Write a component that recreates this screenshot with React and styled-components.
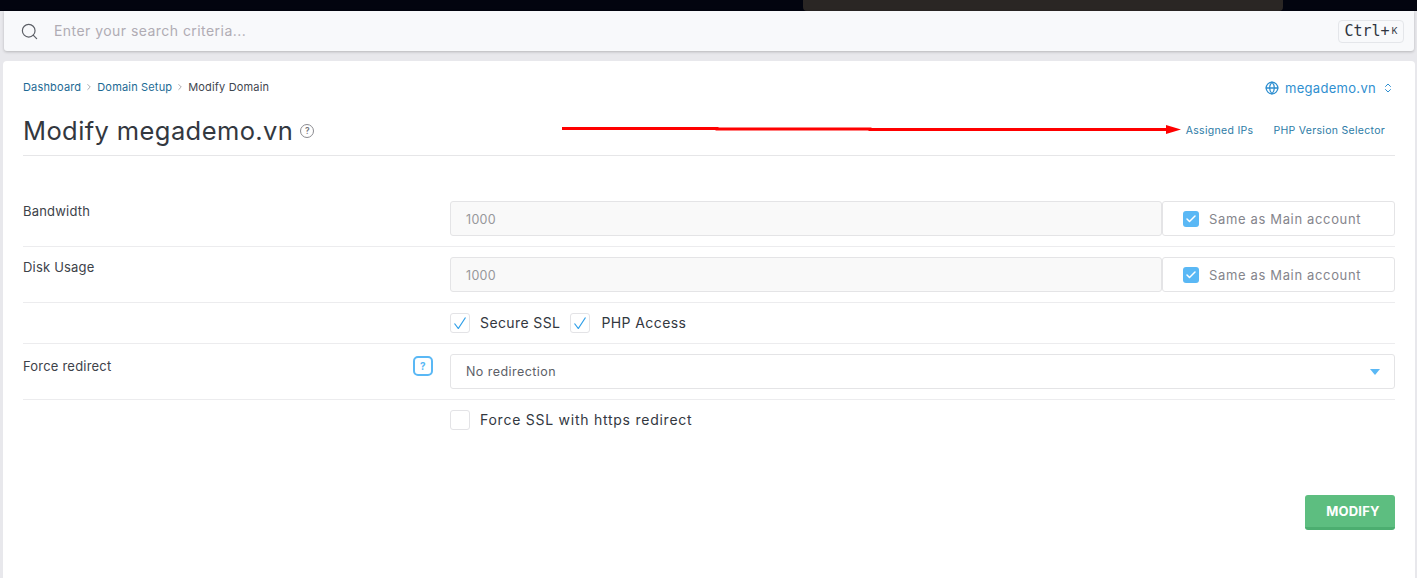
import React from "react";
import styled, { createGlobalStyle } from "styled-components";
import { Search, Globe, ChevronsUpDown, ChevronRight, Check } from "lucide-react";

const GlobalStyle = createGlobalStyle`
  html, body {
    margin: 0;
    height: 100%;
    overflow: hidden;
    background: #e8e8ec;
    font-family: Inter, "Liberation Sans", sans-serif;
  }
  * { box-sizing: border-box; }
`;

const Page = styled.div`
  height: 578px;
  display: flex;
  flex-direction: column;
`;

const TopBand = styled.div`
  height: 11px;
  flex: none;
  background: #02040f;
  padding-left: 803px;
`;

const TabEdge = styled.div`
  width: 480px;
  height: 11px;
  background: #2a2624;
  border-bottom-left-radius: 4px;
  border-bottom-right-radius: 4px;
`;

const SearchBar = styled.div`
  flex: none;
  height: 40px;
  margin: 0 3px 0 4px;
  padding: 0 10px 0 16px;
  display: flex;
  align-items: center;
  background: #f8f9fb;
  border-radius: 0 0 3px 3px;
  box-shadow: 0 1px 3px rgba(0, 0, 0, 0.22);
`;

const SearchText = styled.span`
  margin-left: 15px;
  padding-bottom: 2px;
  flex: 1;
  font-size: 14px;
  letter-spacing: 0.45px;
  color: #b0acb4;
`;

const Kbd = styled.kbd`
  height: 23px;
  width: 66px;
  padding-bottom: 1px;
  display: flex;
  align-items: center;
  justify-content: center;
  border: 1px solid #e4e6ea;
  border-radius: 4px;
  font-family: "DejaVu Sans Mono", monospace;
  font-size: 15px;
  color: #2e3440;

  small {
    font-family: Inter, sans-serif;
    font-size: 9px;
    margin-left: 2px;
  }
`;

const Card = styled.main`
  flex: 1;
  margin: 10px 2px 0 3px;
  padding: 0 20px;
  background: #fff;
  border-radius: 4px 4px 0 0;
  display: flex;
  flex-direction: column;
`;

const CrumbRow = styled.div`
  height: 52px;
  display: flex;
  align-items: center;
  justify-content: space-between;
`;

const Crumbs = styled.nav`
  display: flex;
  align-items: center;
  gap: 3px;
  font-size: 11px;
  letter-spacing: 0.17px;
  color: #3f4650;
  svg { color: #9a9aa0; }
`;

const CrumbLink = styled.a`
  color: #1c6a94;
`;

const DomainPicker = styled.div`
  display: flex;
  align-items: center;
  gap: 6px;
  margin: 2px 1px 0 0;
  font-size: 13px;
  letter-spacing: 0.3px;
  color: #2f8fd0;
`;

const PickerArrows = styled(ChevronsUpDown)`
  margin-left: 0;
`;

const TitleRow = styled.header`
  height: 43px;
  padding-top: 1px;
  display: flex;
  align-items: flex-start;
  border-bottom: 1px solid #e6e6e8;
`;

const Title = styled.h1`
  margin: 0;
  font-size: 25.5px;
  line-height: 34px;
  font-weight: 400;
  letter-spacing: 0.4px;
  color: #33383f;
`;

const HelpDot = styled.span`
  width: 14px;
  height: 14px;
  margin: 10px 0 0 7px;
  border: 1.5px solid #8b8b90;
  border-radius: 50%;
  display: flex;
  align-items: center;
  justify-content: center;
  font-size: 8.5px;
  font-weight: 600;
  color: #77777c;
`;

const TitleLinks = styled.div`
  margin-left: auto;
  padding: 9px 10px 0 0;
  display: flex;
  gap: 20px;
  position: relative;
  font-size: 10.5px;
  line-height: 16px;
  letter-spacing: 0.3px;
`;

const TitleLink = styled.a`
  color: #2d7ba6;
`;

const Arrow = styled.svg`
  position: absolute;
  right: 100%;
  top: 10px;
  margin-right: 5px;
`;

const Form = styled.section`
  padding-top: 35px;
  display: flex;
  flex-direction: column;
`;

const Row = styled.div`
  height: ${(p) => p.$height}px;
  padding-top: ${(p) => (p.$center ? 0 : 10)}px;
  display: flex;
  align-items: ${(p) => (p.$center ? "center" : "flex-start")};
  border-bottom: ${(p) => (p.$last ? "none" : "1px solid #ececee")};
`;

const Label = styled.label`
  width: 427px;
  flex: none;
  padding-top: ${(p) => p.$top || 1}px;
  font-size: 13px;
  line-height: 18px;
  letter-spacing: 0.2px;
  color: #3d4249;
  display: flex;
  justify-content: space-between;
`;

const QuestionBox = styled.span`
  width: 20px;
  height: 20px;
  margin: -1px 17px 0 0;
  border: 2px solid #5ab8f5;
  border-radius: 5px;
  display: flex;
  align-items: center;
  justify-content: center;
  font-size: 10px;
  font-weight: 700;
  color: #5ab8f5;
`;

const Field = styled.div`
  flex: 1;
  display: flex;
`;

const Input = styled.div`
  flex: 1;
  height: 35px;
  padding: 1px 15px 0;
  display: flex;
  align-items: center;
  background: #f9f9f9;
  border: 1px solid #e4e4e6;
  border-radius: 3px;
  font-size: 12.5px;
  letter-spacing: 0.3px;
  color: #97979b;
`;

const SameBox = styled.div`
  width: 233px;
  height: 35px;
  padding-left: 20px;
  display: flex;
  align-items: center;
  gap: 10px;
  border: 1px solid #e4e4e6;
  border-radius: 3px;
  font-size: 13px;
  letter-spacing: 0.65px;
  color: #85858c;
`;

const FilledCheck = styled.span`
  width: 16px;
  height: 16px;
  border-radius: 3px;
  background: #5ab8f5;
  color: #fff;
  display: flex;
  align-items: center;
  justify-content: center;
`;

const Checks = styled.div`
  display: flex;
  align-items: center;
`;

const CheckBox = styled.span`
  width: 20px;
  height: 20px;
  flex: none;
  border: 1px solid #e3e3e6;
  border-radius: 3px;
  display: flex;
  align-items: center;
  justify-content: center;
`;

const CheckText = styled.span`
  margin: -2px 10px 0 ${(p) => p.$gap || 10}px;
  font-size: 14px;
  letter-spacing: ${(p) => p.$track || 0.4}px;
  color: #33383f;
`;

const Select = styled.div`
  flex: 1;
  height: 35px;
  padding: 0 14px 0 15px;
  display: flex;
  align-items: center;
  justify-content: space-between;
  border: 1px solid #e4e4e6;
  border-radius: 3px;
  font-size: 12.5px;
  letter-spacing: 0.45px;
  color: #5d6068;
`;

const Caret = styled.span`
  width: 0;
  height: 0;
  border-left: 5.5px solid transparent;
  border-right: 5.5px solid transparent;
  border-top: 6px solid #5ab8f5;
`;

const Footer = styled.div`
  display: flex;
  justify-content: flex-end;
  padding-top: 55px;
`;

const ModifyButton = styled.button`
  width: 90px;
  height: 35px;
  padding: 0 0 0 6px;
  border: none;
  border-bottom: 3px solid #4cae70;
  border-radius: 3px;
  background: #5dbe80;
  font-family: inherit;
  font-size: 13px;
  font-weight: 700;
  letter-spacing: 0.2px;
  color: #fff;
`;

const Tick = () => (
  <svg width="12" height="12" viewBox="0 0 12 12" fill="none">
    <path d="M.5 6.500 4.300 11.500 11.500.5" stroke="#2f9fe8" strokeWidth="1.2" />
  </svg>
);

const SameAsMain = () => (
  <SameBox>
    <FilledCheck>
      <Check size={12} strokeWidth={3} />
    </FilledCheck>
    Same as Main account
  </SameBox>
);

export default function App() {
  return (
    <Page>
      <GlobalStyle />
      <TopBand>
        <TabEdge />
      </TopBand>
      <SearchBar>
        <Search size={19} strokeWidth={1.5} color="#5c5f66" />
        <SearchText>Enter your search criteria...</SearchText>
        <Kbd>
          Ctrl+<small>K</small>
        </Kbd>
      </SearchBar>
      <Card>
        <CrumbRow>
          <Crumbs>
            <CrumbLink>Dashboard</CrumbLink>
            <ChevronRight size={10} />
            <CrumbLink>Domain Setup</CrumbLink>
            <ChevronRight size={10} />
            <span>Modify Domain</span>
          </Crumbs>
          <DomainPicker>
            <Globe size={14} strokeWidth={2.2} />
            <span>megademo.vn</span>
            <PickerArrows size={12} />
          </DomainPicker>
        </CrumbRow>
        <TitleRow>
          <Title>Modify megademo.vn</Title>
          <HelpDot>?</HelpDot>
          <TitleLinks>
            <Arrow width="619" height="11" viewBox="0 0 619 11">
              <path d="M0 4.500h155v.5h153v.5h297" stroke="#f00" strokeWidth="3" fill="none" />
              <path d="M604 1l15 4.500-15 4.500z" fill="#f00" />
            </Arrow>
            <TitleLink>Assigned IPs</TitleLink>
            <TitleLink>PHP Version Selector</TitleLink>
          </TitleLinks>
        </TitleRow>
        <Form>
          <Row $height={56}>
            <Label>Bandwidth</Label>
            <Field>
              <Input>1000</Input>
              <SameAsMain />
            </Field>
          </Row>
          <Row $height={56}>
            <Label>Disk Usage</Label>
            <Field>
              <Input>1000</Input>
              <SameAsMain />
            </Field>
          </Row>
          <Row $height={41} $center>
            <Label />
            <Checks>
              <CheckBox><Tick /></CheckBox>
              <CheckText>Secure SSL</CheckText>
              <CheckBox><Tick /></CheckBox>
              <CheckText $gap={11}>PHP Access</CheckText>
            </Checks>
          </Row>
          <Row $height={56}>
            <Label $top={3}>
              Force redirect
              <QuestionBox>?</QuestionBox>
            </Label>
            <Select>
              No redirection
              <Caret />
            </Select>
          </Row>
          <Row $height={40} $center $last>
            <Label />
            <Checks>
              <CheckBox />
              <CheckText $track={0.75}>Force SSL with https redirect</CheckText>
            </Checks>
          </Row>
        </Form>
        <Footer>
          <ModifyButton>MODIFY</ModifyButton>
        </Footer>
      </Card>
    </Page>
  );
}
